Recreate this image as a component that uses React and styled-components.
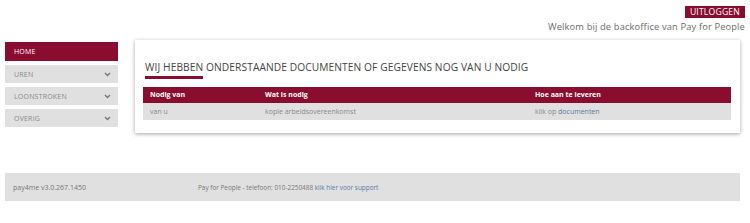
import React from "react";
import styled, { createGlobalStyle } from "styled-components";

const Global = createGlobalStyle`
  html, body { margin: 0; padding: 0; background: #fff; }
  body { font-family: "Open Sans", "Liberation Sans", sans-serif; }
  * { box-sizing: border-box; }
`;

const RED = "#8a0c2e";

const Page = styled.div`
  width: 750px;
  padding: 0 5px 0 5px;
`;

const TopBar = styled.header`
  display: flex;
  flex-direction: column;
  align-items: flex-end;
  padding-top: 6px;
  height: 40px;
`;

const LogoutButton = styled.button`
  background: ${RED};
  color: #fff;
  border: 0;
  font-family: inherit;
  font-size: 8.6px;
  line-height: 12px;
  height: 12px;
  padding: 0 5px;
  letter-spacing: 0.2px;
`;

const Welcome = styled.div`
  font-size: 9.3px;
  color: #6a6a6a;
  margin-top: 2px;
  letter-spacing: 0.15px;
`;

const Main = styled.div`
  display: flex;
  gap: 17px;
  align-items: flex-start;
`;

const Sidebar = styled.nav`
  width: 113px;
  display: flex;
  flex-direction: column;
  gap: 4px;
  margin-top: 2px;
`;

const NavItem = styled.div`
  height: ${(p) => (p.$active ? "19px" : "18px")};
  background: ${(p) => (p.$active ? RED : "#e0e0e0")};
  color: ${(p) => (p.$active ? "#fff" : "#888")};
  font-size: 7px;
  display: flex;
  align-items: center;
  justify-content: space-between;
  padding: 0 7px 0 9px;
  letter-spacing: 0.2px;
`;

const Chevron = () => (
  <svg width="7" height="5" viewBox="0 0 7 5">
    <path d="M1 1 L3.5 3.5 L6 1" fill="none" stroke="#777" strokeWidth="1.4" />
  </svg>
);

const Panel = styled.section`
  width: 605px;
  height: 93px;
  background: #fff;
  box-shadow: 0 1px 4px rgba(0, 0, 0, 0.35);
  padding: 21px 8px 0 8px;
`;

const Title = styled.h1`
  margin: 0 0 0 2px;
  font-weight: 400;
  font-size: 10.2px;
  line-height: 12px;
  color: #444;
  letter-spacing: 0.1px;
`;

const TitleRule = styled.div`
  width: 58px;
  height: 3px;
  background: ${RED};
  margin: 3px 0 8px 2px;
`;

const Table = styled.div`
  width: 588px;
  display: grid;
  grid-template-columns: 115px 270px 1fr;
`;

const HeadCell = styled.div`
  background: ${RED};
  color: #fff;
  font-weight: 700;
  font-size: 7px;
  height: 16px;
  line-height: 16px;
  padding-left: 7px;
`;

const Cell = styled.div`
  background: #e0e0e0;
  color: #888;
  font-size: 7px;
  height: 17px;
  line-height: 17px;
  padding-left: 7px;
`;

const Link = styled.a`
  color: #5a7aa6;
  text-decoration: none;
`;

const Footer = styled.footer`
  margin-top: 40px;
  width: 735px;
  height: 28px;
  background: #e0e0e0;
  display: flex;
  align-items: center;
  padding-left: 8px;
`;

const Version = styled.div`
  width: 185px;
  font-size: 7px;
  color: #777;
`;

const Contact = styled.div`
  font-size: 6.4px;
  color: #777;
`;

export default function App() {
  return (
    <>
      <Global />
      <Page>
        <TopBar>
          <LogoutButton>UITLOGGEN</LogoutButton>
          <Welcome>Welkom bij de backoffice van Pay for People</Welcome>
        </TopBar>
        <Main>
          <Sidebar>
            <NavItem $active>HOME</NavItem>
            <NavItem>UREN<Chevron /></NavItem>
            <NavItem>LOONSTROKEN<Chevron /></NavItem>
            <NavItem>OVERIG<Chevron /></NavItem>
          </Sidebar>
          <Panel>
            <Title>WIJ HEBBEN ONDERSTAANDE DOCUMENTEN OF GEGEVENS NOG VAN U NODIG</Title>
            <TitleRule />
            <Table>
              <HeadCell>Nodig van</HeadCell>
              <HeadCell>Wat is nodig</HeadCell>
              <HeadCell>Hoe aan te leveren</HeadCell>
              <Cell>van u</Cell>
              <Cell>kopie arbeidsovereenkomst</Cell>
              <Cell>klik op <Link href="#">documenten</Link></Cell>
            </Table>
          </Panel>
        </Main>
        <Footer>
          <Version>pay4me v3.0.267.1450</Version>
          <Contact>
            Pay for People - telefoon: 010-2250488 <Link href="#">klik hier voor support</Link>
          </Contact>
        </Footer>
      </Page>
    </>
  );
}
